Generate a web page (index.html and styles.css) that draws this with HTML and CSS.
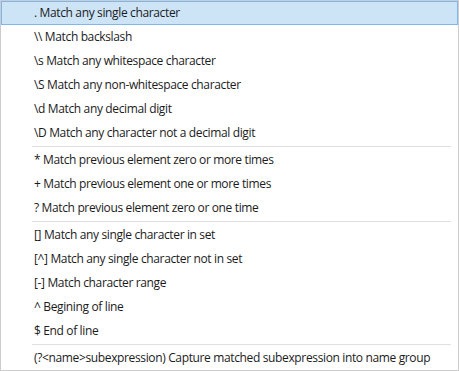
FILE: index.html
```html
<!DOCTYPE html>
<html>
<head>
    <meta charset="UTF-8">
    <title>Regex Menu</title>
    <link rel="stylesheet" href="styles.css">
</head>
<body>
    <div class="menu">
        <div class="item active">. Match any single character</div>
        <div class="item">\\ Match backslash</div>
        <div class="item">\s Match any whitespace character</div>
        <div class="item">\S Match any non-whitespace character</div>
        <div class="item">\d Match any decimal digit</div>
        <div class="item">\D Match any character not a decimal digit</div>
        <div class="sep"></div>
        <div class="item">* Match previous element zero or more times</div>
        <div class="item">+ Match previous element one or more times</div>
        <div class="item">? Match previous element zero or one time</div>
        <div class="sep"></div>
        <div class="item">[] Match any single character in set</div>
        <div class="item">[^] Match any single character not in set</div>
        <div class="item">[-] Match character range</div>
        <div class="item">^ Begining of line</div>
        <div class="item">$ End of line</div>
        <div class="sep"></div>
        <div class="item">(?&lt;name&gt;subexpression) Capture matched subexpression into name group</div>
    </div>
</body>
</html>
```

FILE: styles.css
```css
body {
    margin: 0;
    background-color: white;
    font-family: "Open Sans", "Noto Sans", sans-serif;
    font-size: 12px;
    letter-spacing: -0.36px;
    color: #1b1b1b;
}
.menu {
    width: 457px;
    height: 369px;
    border: 1px solid #cccccc;
    display: flex;
    flex-direction: column;
    background-color: white;
}
.item {
    height: 24px;
    line-height: 24px;
    padding-left: 33px;
    box-sizing: border-box;
    white-space: nowrap;
}
.item.active {
    background-color: #cde4f7;
    border: 1px solid #80b6ea;
    line-height: 22px;
    padding-left: 32px;
}
.sep {
    height: 1px;
    margin: 1px 7px 1px 31px;
    background-color: #e0e0e0;
}
```
